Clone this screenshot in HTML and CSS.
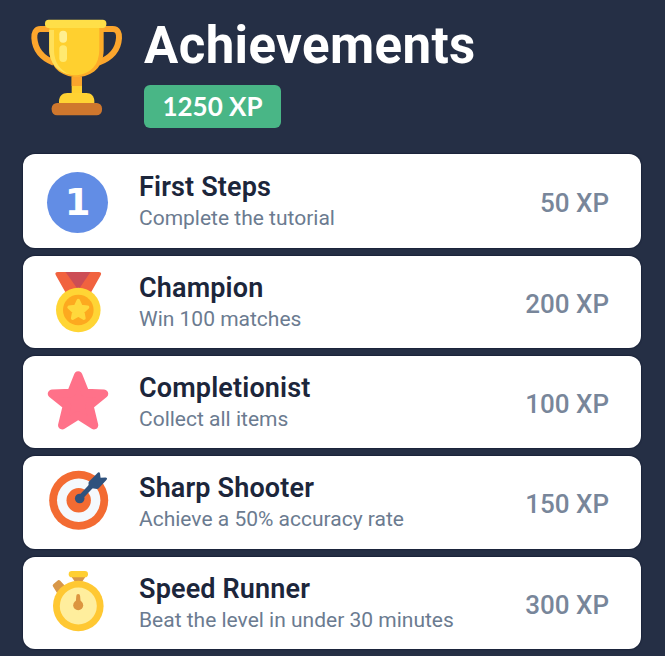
FILE: index.html
```html
<!doctype html>
<html lang="en">
<head>
  <meta charset="utf-8" />
  <meta name="viewport" content="width=device-width,initial-scale=1" />
  <title>Achievements</title>
  <link rel="stylesheet" href="styles.css">
</head>
<body>
  <div class="wrap">
    <header class="header">
      <svg class="trophy" viewBox="0 0 360 360" aria-hidden="true">
        <path d="M92 57H62C46 57 42 71 43 84c2 34 24 60 58 74" fill="none" stroke="#fca62d" stroke-width="18"/>
        <path d="M248 57h30c16 0 20 14 19 27-2 34-24 60-62 74" fill="none" stroke="#fca62d" stroke-width="18"/>
        <path d="M88 50h163v70c0 50-34 81-81 81s-82-31-82-81z" fill="#fdac29"/>
        <path d="M88 50h150v67c0 47-24 73-66 79-49 0-84-28-84-79z" fill="#ffd02f"/>
        <path d="M88 60h14v60c0 36 18 61 47 73-36-7-61-34-61-73z" fill="#ffe05a"/>
        <rect x="75" y="29" width="184" height="25" rx="11" fill="#ffdf48"/>
        <rect x="118" y="62" width="23" height="36" rx="11" fill="#ffef91"/>
        <rect x="118" y="106" width="23" height="50" rx="11" fill="#ffe971"/>
        <path d="M155 200h31v56h-31z" fill="#ffcf30"/>
        <path d="M155 200h31v28h-31z" fill="#fba52c"/>
        <path d="M117 280v-6c0-15 10-25 25-25h57c15 0 24 10 24 25v6z" fill="#ffd233"/>
        <rect x="95" y="279" width="151" height="37" rx="16" fill="#cf772d"/>
      </svg>
      <div>
        <h1>Achievements</h1>
        <div class="total">1250 XP</div>
      </div>
    </header>

    <div class="list">
      <div class="card first">
        <div class="icon number"><span>1</span></div>
        <div class="info">
          <h2>First Steps</h2>
          <p>Complete the tutorial</p>
        </div>
        <div class="xp">50 XP</div>
      </div>

      <div class="card">
        <svg class="icon" viewBox="0 0 64 64" aria-hidden="true">
          <path d="M12 2h40.500q4 0 2 3.500L43 26H21.500L10 5.500Q8 2 12 2z" fill="#f1623f"/>
          <path d="M19.500 2h25L32.300 20z" fill="#cc4d55"/>
          <circle cx="32.300" cy="40" r="22.300" fill="#ffd535"/>
          <circle cx="32.300" cy="40" r="15.300" fill="#fda91f"/>
          <path d="M32.300 30.500l2.800 5.900 6.500.9-4.800 4.500 1.200 6.400-5.700-3.100-5.700 3.100 1.200-6.400-4.800-4.500 6.500-.9z" fill="#ffd83c" stroke="#ffd83c" stroke-width="3.400" stroke-linejoin="round"/>
        </svg>
        <div class="info">
          <h2>Champion</h2>
          <p>Win 100 matches</p>
        </div>
        <div class="xp">200 XP</div>
      </div>

      <div class="card">
        <svg class="icon" viewBox="0 0 64 64" aria-hidden="true">
          <path d="M32.200 5.500l7 17.500 18.800.8-14.700 12L48 55.200 32.200 45.200 16.300 55.200 21 35.800 6 23.800 25.200 23z" fill="#ff7189" stroke="#ff7189" stroke-width="8.500" stroke-linejoin="round"/>
        </svg>
        <div class="info">
          <h2>Completionist</h2>
          <p>Collect all items</p>
        </div>
        <div class="xp">100 XP</div>
      </div>

      <div class="card">
        <svg class="icon" viewBox="0 0 64 64" aria-hidden="true">
          <circle cx="32.700" cy="30.300" r="29.500" fill="#f36b32"/>
          <circle cx="32.700" cy="30.300" r="21.700" fill="#f5f9fd"/>
          <circle cx="32.700" cy="30.300" r="12.200" fill="#f36b32"/>
          <circle cx="33.700" cy="28.500" r="4.800" fill="#2f527d"/>
          <path d="M34 28l15-16" stroke="#2f527d" stroke-width="5"/>
          <path d="M43.500 11l8.500-8.500q1.500-1 2 1l.6 4.200 4.800-.2q2.500.2 1.200 2.200L53 18q-.8 1-2.200 1l-6-1q-2-.3-2.100-2l-.2-3q0-1.200 1-2z" fill="#2f527d"/>
        </svg>
        <div class="info">
          <h2>Sharp Shooter</h2>
          <p>Achieve a 50% accuracy rate</p>
        </div>
        <div class="xp">150 XP</div>
      </div>

      <div class="card">
        <svg class="icon" viewBox="0 0 64 64" aria-hidden="true">
          <path d="M7.500 13l4.500-3.700q1-.7 2 .3l6 6.500-8.300 7L7 15.500q-1-1.500.5-2.500z" fill="#d89748"/>
          <path d="M25 5h15l-4 6h-7z" fill="#d89748"/>
          <rect x="22.700" y="0" width="19.300" height="6.300" rx="3.100" fill="#ffcf32"/>
          <circle cx="32.300" cy="35" r="25.300" fill="#ffc832"/>
          <circle cx="32.300" cy="35" r="18.500" fill="#ffee9d"/>
          <circle cx="32.200" cy="34.300" r="5" fill="#dc9540"/>
          <path d="M30.300 25q0-2 1.900-2t1.900 2l.7 8h-5.200z" fill="#dc9540"/>
        </svg>
        <div class="info">
          <h2>Speed Runner</h2>
          <p>Beat the level in under 30 minutes</p>
        </div>
        <div class="xp">300 XP</div>
      </div>
    </div>
  </div>
</body>
</html>
```
FILE: styles.css
```css
:root{--bg:#252f45;--card:#fff;--text:#1c263b;--muted:#6b7b90;--green:#49b686;--blue:#628de5}
*{box-sizing:border-box}
body{margin:0;height:656px;overflow:hidden;background:var(--bg);color:var(--text);font-family:Roboto,"Liberation Sans",sans-serif}
h1,h2,p{margin:0}
.wrap{padding:10px 24px 0 23px}
.header{display:flex;gap:7px;height:144px;margin-left:-3px}
.trophy{width:120px;height:120px;flex:none;margin-right:-3px}
h1{height:75px;padding-top:9px;font-size:51px;line-height:54px;font-weight:700;letter-spacing:.4px;color:#fff;white-space:nowrap}
.total{width:137px;height:43px;border-radius:6px;background:var(--green);color:#fff;font:700 26px/43px Lato,sans-serif;text-align:center}
.list{display:flex;flex-direction:column;gap:8px}
.card{display:flex;align-items:center;height:92.2px;padding:0 32px 0 23px;border-radius:12px;background:var(--card);box-shadow:0 0 1px 1px #1b243a}
.card.first{height:94px}
.icon{width:64px;height:64px;flex:none}
.number{display:flex;align-items:center;justify-content:center;width:61px;height:61px;margin:2px 2px 0 1px;border-radius:50%;background:var(--blue);color:#fff;font:700 37px/1 "DejaVu Sans",sans-serif}
.info{flex:1;margin-left:29px;padding-top:2px;white-space:nowrap}
h2{font-size:27px;line-height:32px;font-weight:600;letter-spacing:.15px}
p{font-size:21px;line-height:30px;color:var(--muted)}
.xp{font-size:26px;font-weight:500;color:#78869a;padding-top:4px}
```
